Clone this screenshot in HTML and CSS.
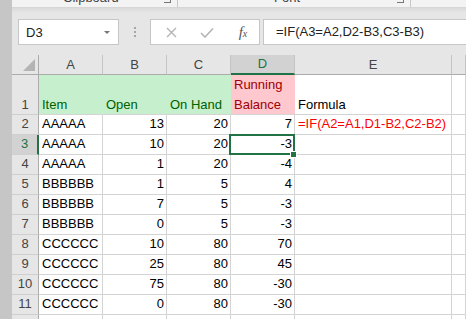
FILE: index.html
```html
<!DOCTYPE html>
<html lang="en">
<head>
    <meta charset="UTF-8">
    <title>Running Balance</title>
    <link rel="stylesheet" href="styles.css">
</head>
<body>
    <div class="frame-edge"></div>
    <div class="app">
        <div class="ribbon">
            <div class="group group-clip">
                <span class="group-label">Clipboard</span>
                <span class="launcher"></span>
            </div>
            <div class="group group-font">
                <span class="group-label">Font</span>
                <span class="launcher"></span>
            </div>
        </div>

        <div class="formula-bar">
            <div class="name-box">
                <span>D3</span>
                <span class="caret"></span>
            </div>
            <div class="grip"><i></i><i></i><i></i></div>
            <div class="fx-buttons">
                <svg width="11" height="11" viewBox="0 0 11 11"><path d="M1 1L10 10M10 1L1 10" stroke="#b4b4b4" stroke-width="1.4" fill="none"/></svg>
                <svg width="14" height="11" viewBox="0 0 14 11"><path d="M1 6L5 10L13 1.5" stroke="#b4b4b4" stroke-width="1.6" fill="none"/></svg>
                <span class="fx">f<small>x</small></span>
            </div>
            <div class="formula-input">=IF(A3=A2,D2-B3,C3-B3)</div>
        </div>

        <div class="sheet">
            <div class="hd corner"><span class="tri"></span></div>
            <div class="hd">A</div>
            <div class="hd">B</div>
            <div class="hd">C</div>
            <div class="hd sel">D</div>
            <div class="hd">E</div>
            <div class="hd"></div>

            <div class="rh tall">1</div>
            <div class="c tall good">Item</div>
            <div class="c tall good">Open</div>
            <div class="c tall good">On Hand</div>
            <div class="c tall bad two">Running<br>Balance</div>
            <div class="c tall">Formula</div>
            <div class="c tall"></div>

            <div class="rh">2</div>
            <div class="c">AAAAA</div>
            <div class="c num">13</div>
            <div class="c num">20</div>
            <div class="c num">7</div>
            <div class="c red">=IF(A2=A1,D1-B2,C2-B2)</div>
            <div class="c"></div>

            <div class="rh rsel">3</div>
            <div class="c">AAAAA</div>
            <div class="c num">10</div>
            <div class="c num">20</div>
            <div class="c num active">-3</div>
            <div class="c"></div>
            <div class="c"></div>

            <div class="rh">4</div>
            <div class="c">AAAAA</div>
            <div class="c num">1</div>
            <div class="c num">20</div>
            <div class="c num">-4</div>
            <div class="c"></div>
            <div class="c"></div>

            <div class="rh">5</div>
            <div class="c">BBBBBB</div>
            <div class="c num">1</div>
            <div class="c num">5</div>
            <div class="c num">4</div>
            <div class="c"></div>
            <div class="c"></div>

            <div class="rh">6</div>
            <div class="c">BBBBBB</div>
            <div class="c num">7</div>
            <div class="c num">5</div>
            <div class="c num">-3</div>
            <div class="c"></div>
            <div class="c"></div>

            <div class="rh">7</div>
            <div class="c">BBBBBB</div>
            <div class="c num">0</div>
            <div class="c num">5</div>
            <div class="c num">-3</div>
            <div class="c"></div>
            <div class="c"></div>

            <div class="rh">8</div>
            <div class="c">CCCCCC</div>
            <div class="c num">10</div>
            <div class="c num">80</div>
            <div class="c num">70</div>
            <div class="c"></div>
            <div class="c"></div>

            <div class="rh">9</div>
            <div class="c">CCCCCC</div>
            <div class="c num">25</div>
            <div class="c num">80</div>
            <div class="c num">45</div>
            <div class="c"></div>
            <div class="c"></div>

            <div class="rh">10</div>
            <div class="c">CCCCCC</div>
            <div class="c num">75</div>
            <div class="c num">80</div>
            <div class="c num">-30</div>
            <div class="c"></div>
            <div class="c"></div>

            <div class="rh">11</div>
            <div class="c">CCCCCC</div>
            <div class="c num">0</div>
            <div class="c num">80</div>
            <div class="c num">-30</div>
            <div class="c"></div>
            <div class="c"></div>

            <div class="rh"></div>
            <div class="c"></div>
            <div class="c"></div>
            <div class="c"></div>
            <div class="c"></div>
            <div class="c"></div>
            <div class="c"></div>
        </div>
    </div>
</body>
</html>
```

FILE: styles.css
```css
body {
    margin: 0;
    padding: 0;
    display: flex;
    height: 319px;
    overflow: hidden;
    background-color: #e6e6e6;
    font-family: "Liberation Sans", Arial, sans-serif;
    font-size: 13px;
    color: #000;
}

.frame-edge {
    width: 12px;
    flex-shrink: 0;
    background-color: #c6c6c6;
}

.app {
    flex: 1;
    min-width: 0;
    overflow: hidden;
}

/* ribbon, cut off at the top */
.ribbon {
    height: 7px;
    display: flex;
    overflow: hidden;
    background-color: #f3f3f3;
    border-bottom: 1px solid #d6d6d6;
}

.group {
    display: flex;
    align-items: flex-start;
    border-right: 1px solid #c8c8c8;
}

.group-clip {
    width: 165px;
}

.group-font {
    width: 232px;
}

.group-label {
    color: #444;
    line-height: 15px;
    margin-top: -10px;
}

.group-clip .group-label {
    margin-left: 51px;
}

.group-font .group-label {
    margin-left: 96px;
}

.launcher {
    margin-left: auto;
    margin-right: 6px;
    margin-top: -4px;
    width: 6px;
    height: 6px;
    border-right: 1px solid #777;
    border-bottom: 1px solid #777;
}

/* formula bar */
.formula-bar {
    display: flex;
    align-items: center;
    padding: 11px 0 10px 6px;
    background: linear-gradient(#dadada, #e6e6e6 5px);
}

.name-box,
.fx-buttons,
.formula-input {
    height: 26px;
    box-sizing: border-box;
    background-color: #fff;
    border: 1px solid #c6c6c6;
}

.name-box {
    width: 101px;
    display: flex;
    align-items: center;
    padding-left: 7px;
    color: #222;
}

.caret {
    margin-left: auto;
    margin-right: 8px;
    border-left: 3px solid transparent;
    border-right: 3px solid transparent;
    border-top: 3px solid #777;
}

.grip {
    width: 31px;
    display: flex;
    flex-direction: column;
    align-items: center;
    gap: 2px;
}

.grip i {
    width: 2px;
    height: 2px;
    background-color: #a6a6a6;
}

.fx-buttons {
    width: 110px;
    display: grid;
    grid-template-columns: repeat(3, 36px);
    justify-items: center;
    align-items: center;
    padding-left: 2px;
}

.fx {
    font-family: "Liberation Serif", "Times New Roman", serif;
    font-style: italic;
    font-size: 15px;
    color: #555;
}

.fx small {
    font-size: 10px;
}

.formula-input {
    flex: 1;
    margin-left: 3px;
    margin-right: -2px;
    padding-left: 12px;
    line-height: 24px;
    color: #222;
}

/* worksheet grid */
.sheet {
    display: grid;
    grid-template-columns: 27px 64px 64px 64px 64px 157px 1fr;
    grid-template-rows: 20px 40px;
    grid-auto-rows: 20px;
    background-color: #fff;
}

.sheet > div {
    box-sizing: border-box;
    white-space: nowrap;
}

.hd {
    background-color: #e6e6e6;
    color: #444;
    text-align: center;
    line-height: 19px;
    border-right: 1px solid #c4c4c4;
    border-bottom: 1px solid #ababab;
}

.hd.sel {
    background-color: #d2d2d2;
    color: #217346;
    border-bottom: 2px solid #217346;
    line-height: 18px;
}

.corner {
    position: relative;
    border-right-color: #ababab;
}

.tri {
    position: absolute;
    right: 3px;
    bottom: 3px;
    border-left: 12px solid transparent;
    border-bottom: 12px solid #b4b4b4;
}

.rh {
    background-color: #e6e6e6;
    color: #444;
    text-align: center;
    line-height: 17px;
    padding-bottom: 2px;
    border-right: 1px solid #ababab;
    border-bottom: 1px solid #cfcfcf;
}

.rh.rsel {
    background-color: #d2d2d2;
    color: #217346;
    border-right: 2px solid #217346;
}

.c {
    line-height: 17px;
    padding: 0 2px 2px 3px;
    border-right: 1px solid #d4d4d4;
    border-bottom: 1px solid #d4d4d4;
}

.num {
    text-align: right;
}

.tall {
    line-height: 20px;
    padding-top: 20px;
    padding-bottom: 0;
}

.tall.two {
    padding-top: 0;
}

.good {
    background-color: #c6efce;
    color: #006100;
    border-right-color: #c6efce;
}

.bad {
    background-color: #ffc7ce;
    color: #9c0006;
    border-right-color: #ffc7ce;
}

.red {
    color: #ff0000;
}

.active {
    position: relative;
}

.active::after {
    content: "";
    position: absolute;
    top: -1px;
    left: -2px;
    right: -1px;
    bottom: -1px;
    border: 2px solid #217346;
}

.active::before {
    content: "";
    position: absolute;
    right: -3px;
    bottom: -4px;
    width: 5px;
    height: 5px;
    background-color: #217346;
    border: 1px solid #fff;
    z-index: 1;
}
```
